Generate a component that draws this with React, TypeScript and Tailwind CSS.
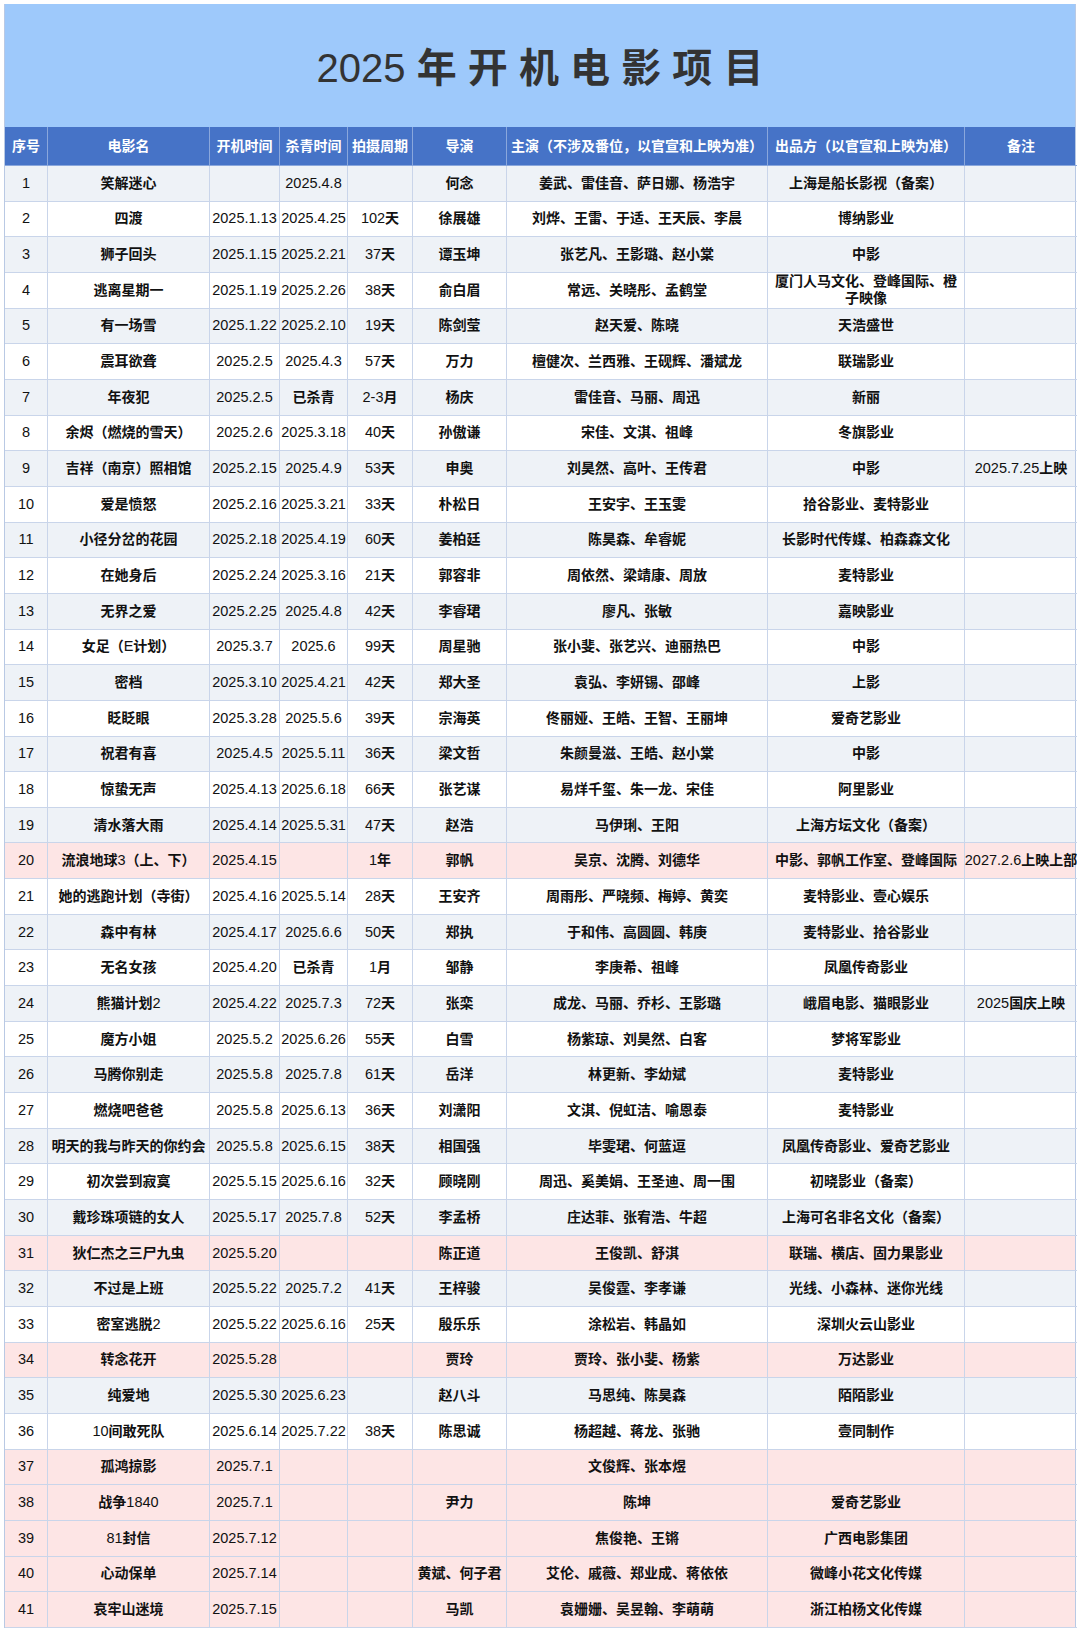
import React from 'react';

type Row = {
  no: number;
  name: string;
  start: string;
  end: string;
  days: string;
  director: string;
  cast: string;
  producer: string;
  note: string;
  tone: 'gray' | 'white' | 'pink';
};

const FONT = "font-['Liberation_Sans','Noto_Sans_CJK_SC',sans-serif]";

const COLS = 'grid grid-cols-[43px_162px_70px_68px_65px_94px_261px_197px_112px]';

const HEADERS = [
  '序号',
  '电影名',
  '开机时间',
  '杀青时间',
  '拍摄周期',
  '导演',
  '主演（不涉及番位，以官宣和上映为准）',
  '出品方（以官宣和上映为准）',
  '备注',
];

// name | start | end | days | director | cast | producer | note
const RAW: [string, string, string, string, string, string, string, string][] = [
  ['笑解迷心', '', '2025.4.8', '', '何念', '姜武、雷佳音、萨日娜、杨浩宇', '上海是船长影视（备案）', ''],
  ['四渡', '2025.1.13', '2025.4.25', '102天', '徐展雄', '刘烨、王雷、于适、王天辰、李晨', '博纳影业', ''],
  ['狮子回头', '2025.1.15', '2025.2.21', '37天', '谭玉坤', '张艺凡、王影璐、赵小棠', '中影', ''],
  ['逃离星期一', '2025.1.19', '2025.2.26', '38天', '俞白眉', '常远、关晓彤、孟鹤堂', '厦门人马文化、登峰国际、橙子映像', ''],
  ['有一场雪', '2025.1.22', '2025.2.10', '19天', '陈剑莹', '赵天爱、陈晓', '天浩盛世', ''],
  ['震耳欲聋', '2025.2.5', '2025.4.3', '57天', '万力', '檀健次、兰西雅、王砚辉、潘斌龙', '联瑞影业', ''],
  ['年夜犯', '2025.2.5', '已杀青', '2-3月', '杨庆', '雷佳音、马丽、周迅', '新丽', ''],
  ['余烬（燃烧的雪天）', '2025.2.6', '2025.3.18', '40天', '孙傲谦', '宋佳、文淇、祖峰', '冬旗影业', ''],
  ['吉祥（南京）照相馆', '2025.2.15', '2025.4.9', '53天', '申奥', '刘昊然、高叶、王传君', '中影', '2025.7.25上映'],
  ['爱是愤怒', '2025.2.16', '2025.3.21', '33天', '朴松日', '王安宇、王玉雯', '拾谷影业、麦特影业', ''],
  ['小径分岔的花园', '2025.2.18', '2025.4.19', '60天', '姜柏廷', '陈昊森、牟睿妮', '长影时代传媒、柏森森文化', ''],
  ['在她身后', '2025.2.24', '2025.3.16', '21天', '郭容非', '周依然、梁靖康、周放', '麦特影业', ''],
  ['无界之爱', '2025.2.25', '2025.4.8', '42天', '李睿珺', '廖凡、张敏', '嘉映影业', ''],
  ['女足（E计划）', '2025.3.7', '2025.6', '99天', '周星驰', '张小斐、张艺兴、迪丽热巴', '中影', ''],
  ['密档', '2025.3.10', '2025.4.21', '42天', '郑大圣', '袁弘、李妍锡、邵峰', '上影', ''],
  ['眨眨眼', '2025.3.28', '2025.5.6', '39天', '宗海英', '佟丽娅、王皓、王智、王丽坤', '爱奇艺影业', ''],
  ['祝君有喜', '2025.4.5', '2025.5.11', '36天', '梁文哲', '朱颜曼滋、王皓、赵小棠', '中影', ''],
  ['惊蛰无声', '2025.4.13', '2025.6.18', '66天', '张艺谋', '易烊千玺、朱一龙、宋佳', '阿里影业', ''],
  ['清水落大雨', '2025.4.14', '2025.5.31', '47天', '赵浩', '马伊琍、王阳', '上海方坛文化（备案）', ''],
  ['流浪地球3（上、下）', '2025.4.15', '', '1年', '郭帆', '吴京、沈腾、刘德华', '中影、郭帆工作室、登峰国际', '2027.2.6上映上部'],
  ['她的逃跑计划（寺街）', '2025.4.16', '2025.5.14', '28天', '王安齐', '周雨彤、严晓频、梅婷、黄奕', '麦特影业、壹心娱乐', ''],
  ['森中有林', '2025.4.17', '2025.6.6', '50天', '郑执', '于和伟、高圆圆、韩庚', '麦特影业、拾谷影业', ''],
  ['无名女孩', '2025.4.20', '已杀青', '1月', '邹静', '李庚希、祖峰', '凤凰传奇影业', ''],
  ['熊猫计划2', '2025.4.22', '2025.7.3', '72天', '张栾', '成龙、马丽、乔杉、王影璐', '峨眉电影、猫眼影业', '2025国庆上映'],
  ['魔方小姐', '2025.5.2', '2025.6.26', '55天', '白雪', '杨紫琼、刘昊然、白客', '梦将军影业', ''],
  ['马腾你别走', '2025.5.8', '2025.7.8', '61天', '岳洋', '林更新、李幼斌', '麦特影业', ''],
  ['燃烧吧爸爸', '2025.5.8', '2025.6.13', '36天', '刘潇阳', '文淇、倪虹洁、喻恩泰', '麦特影业', ''],
  ['明天的我与昨天的你约会', '2025.5.8', '2025.6.15', '38天', '相国强', '毕雯珺、何蓝逗', '凤凰传奇影业、爱奇艺影业', ''],
  ['初次尝到寂寞', '2025.5.15', '2025.6.16', '32天', '顾晓刚', '周迅、奚美娟、王圣迪、周一围', '初晓影业（备案）', ''],
  ['戴珍珠项链的女人', '2025.5.17', '2025.7.8', '52天', '李孟桥', '庄达菲、张宥浩、牛超', '上海可名非名文化（备案）', ''],
  ['狄仁杰之三尸九虫', '2025.5.20', '', '', '陈正道', '王俊凯、舒淇', '联瑞、横店、固力果影业', ''],
  ['不过是上班', '2025.5.22', '2025.7.2', '41天', '王梓骏', '吴俊霆、李孝谦', '光线、小森林、迷你光线', ''],
  ['密室逃脱2', '2025.5.22', '2025.6.16', '25天', '殷乐乐', '涂松岩、韩晶如', '深圳火云山影业', ''],
  ['转念花开', '2025.5.28', '', '', '贾玲', '贾玲、张小斐、杨紫', '万达影业', ''],
  ['纯爱地', '2025.5.30', '2025.6.23', '', '赵八斗', '马思纯、陈昊森', '陌陌影业', ''],
  ['10间敢死队', '2025.6.14', '2025.7.22', '38天', '陈思诚', '杨超越、蒋龙、张驰', '壹同制作', ''],
  ['孤鸿掠影', '2025.7.1', '', '', '', '文俊辉、张本煜', '', ''],
  ['战争1840', '2025.7.1', '', '', '尹力', '陈坤', '爱奇艺影业', ''],
  ['81封信', '2025.7.12', '', '', '', '焦俊艳、王锵', '广西电影集团', ''],
  ['心动保单', '2025.7.14', '', '', '黄斌、何子君', '艾伦、戚薇、郑业成、蒋依依', '微峰小花文化传媒', ''],
  ['哀牢山迷境', '2025.7.15', '', '', '马凯', '袁姗姗、吴昱翰、李萌萌', '浙江柏杨文化传媒', ''],
];

const PINK = [20, 31, 34, 37, 38, 39, 40, 41];
const GRAY = [1, 3, 5, 7, 9, 11, 13, 15, 17, 19, 22, 24, 26, 28, 30, 32, 35];

const ROWS: Row[] = RAW.map((r, i) => {
  const no = i + 1;
  return {
    no,
    name: r[0],
    start: r[1],
    end: r[2],
    days: r[3],
    director: r[4],
    cast: r[5],
    producer: r[6],
    note: r[7],
    tone: PINK.includes(no) ? 'pink' : GRAY.includes(no) ? 'gray' : 'white',
  };
});

const TONE_BG = {
  gray: 'bg-[#eef2f7]',
  white: 'bg-white',
  pink: 'bg-[#fde5e5]',
};

// Latin runs stay regular and a touch larger, CJK runs go bold (like the sheet's PingFang)
function Txt({ s }: { s: string }) {
  const parts = s.match(/[\x00-\x7f]+|[^\x00-\x7f]+/g) ?? [];
  return (
    <>
      {parts.map((p, i) =>
        /^[\x00-\x7f]/.test(p) ? (
          <span key={i} className="text-[14.5px] font-normal">
            {p}
          </span>
        ) : (
          <span key={i} className="font-bold">
            {p}
          </span>
        ),
      )}
    </>
  );
}

function Cell({ s, last }: { s: string; last?: boolean }) {
  return (
    <div
      className={`flex items-center justify-center overflow-hidden px-[2px] text-center leading-[17px] border-b border-[#c9d5ea] ${
        last ? 'whitespace-nowrap' : 'border-r'
      }`}
    >
      <span>
        <Txt s={s} />
      </span>
    </div>
  );
}

export default function App() {
  return (
    <div className={`w-[1080px] h-[1633px] bg-white p-[4px] ${FONT}`}>
      <div className="w-[1072px] border-x border-[#b9c9e4]">
        {/* Title band */}
        <div className="flex h-[123px] items-center justify-center bg-[#9ec9fb] pt-[4px]">
          <h1 className="text-[40px] font-bold text-[#333333]">
            <span className="font-normal">2025</span> 年 开 机 电 影 项 目
          </h1>
        </div>

        {/* Column headers */}
        <div className={`${COLS} h-[39px] bg-[#4673c7] text-[14px] font-bold text-white`}>
          {HEADERS.map((h, i) => (
            <div
              key={h}
              className={`flex items-center justify-center whitespace-nowrap border-b border-[#8aa7dc] ${
                i < HEADERS.length - 1 ? 'border-r' : ''
              }`}
            >
              {h}
            </div>
          ))}
        </div>

        {/* Rows */}
        {ROWS.map((r) => (
          <div
            key={r.no}
            className={`${COLS} h-[35.66px] text-[14px] text-[#111111] ${TONE_BG[r.tone]}`}
          >
            <Cell s={String(r.no)} />
            <Cell s={r.name} />
            <Cell s={r.start} />
            <Cell s={r.end} />
            <Cell s={r.days} />
            <Cell s={r.director} />
            <Cell s={r.cast} />
            <Cell s={r.producer} />
            <Cell s={r.note} last />
          </div>
        ))}
      </div>
    </div>
  );
}
